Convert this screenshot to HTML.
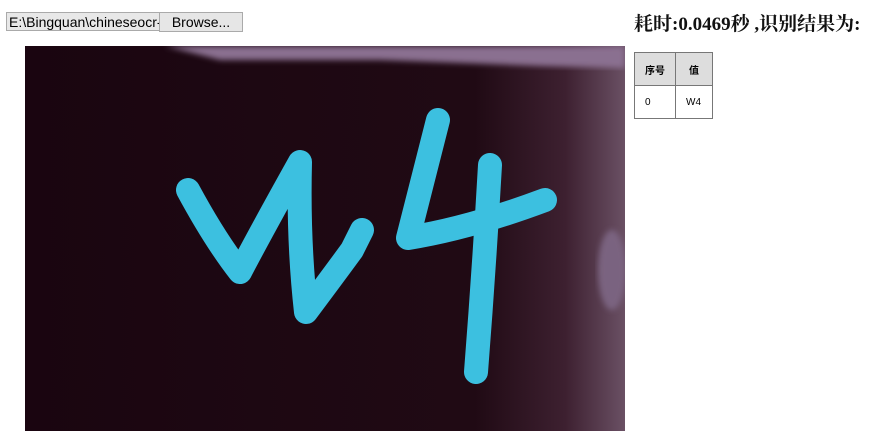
<!DOCTYPE html><html><head><style>
body{margin:0;width:886px;height:447px;background:#fff;font-family:"Liberation Sans",sans-serif;position:relative;overflow:hidden}
.file{position:absolute;left:6px;top:12px;height:19px;border:1px solid #aaa;background:#e8e8e8;font-size:14px;line-height:19px;padding-left:2px;overflow:hidden;white-space:nowrap;box-sizing:border-box;width:155px}
.btn{position:absolute;left:159px;top:12px;width:84px;height:20px;border:1px solid #aaa;background:#e6e6e6;font-size:14px;line-height:19px;text-align:center;box-sizing:border-box}
h{position:absolute;left:634px;top:9px;font:bold 19px "Liberation Serif","Noto Serif CJK SC",serif;color:#111}
table{position:absolute;left:634px;top:52px;border-collapse:collapse;font-size:10px;font-family:"Liberation Sans","Noto Sans CJK SC",sans-serif}
td{border:1px solid #777;height:32px;padding:0 10px}
</style></head><body>
<div class="file">E:\Bingquan\chineseocr-a</div><div class="btn">Browse...</div>
<h>耗时:0.0469秒 ,识别结果为:</h>
<table><tr style="background:#ddd;font-weight:bold"><td style="width:20px;height:31px">序号</td><td style="width:16px;text-align:center">值</td></tr><tr><td>0</td><td>W4</td></tr></table>
<svg style="position:absolute;left:25px;top:46px" width="600" height="385" viewBox="25 46 600 385">
<defs><linearGradient id="g" x1="0" x2="1"><stop offset="0" stop-color="#1a0510"/><stop offset="0.75" stop-color="#200a14"/><stop offset="0.9" stop-color="#3d2030"/><stop offset="1" stop-color="#6a5064"/></linearGradient>
<filter id="b"><feGaussianBlur stdDeviation="3"/></filter></defs>
<rect x="25" y="46" width="600" height="385" fill="url(#g)"/>
<path d="M165 46 L625 46 L625 68 L540 66 L380 60 L220 60 Z" fill="#8a7090" filter="url(#b)"/>
<ellipse cx="612" cy="270" rx="14" ry="40" fill="#7a6480" filter="url(#b)"/>
<g fill="none" stroke="#3cc0e0" stroke-width="24" stroke-linecap="round" stroke-linejoin="round">
<path d="M188 190 Q215 240 240 272 Q262 230 300 162 Q298 240 306 312 Q330 280 352 250 L362 230"/>
<path d="M438 120 Q420 190 408 238 Q470 228 545 200"/>
<path d="M490 165 Q484 270 476 372"/>
</g></svg>
</body></html>
